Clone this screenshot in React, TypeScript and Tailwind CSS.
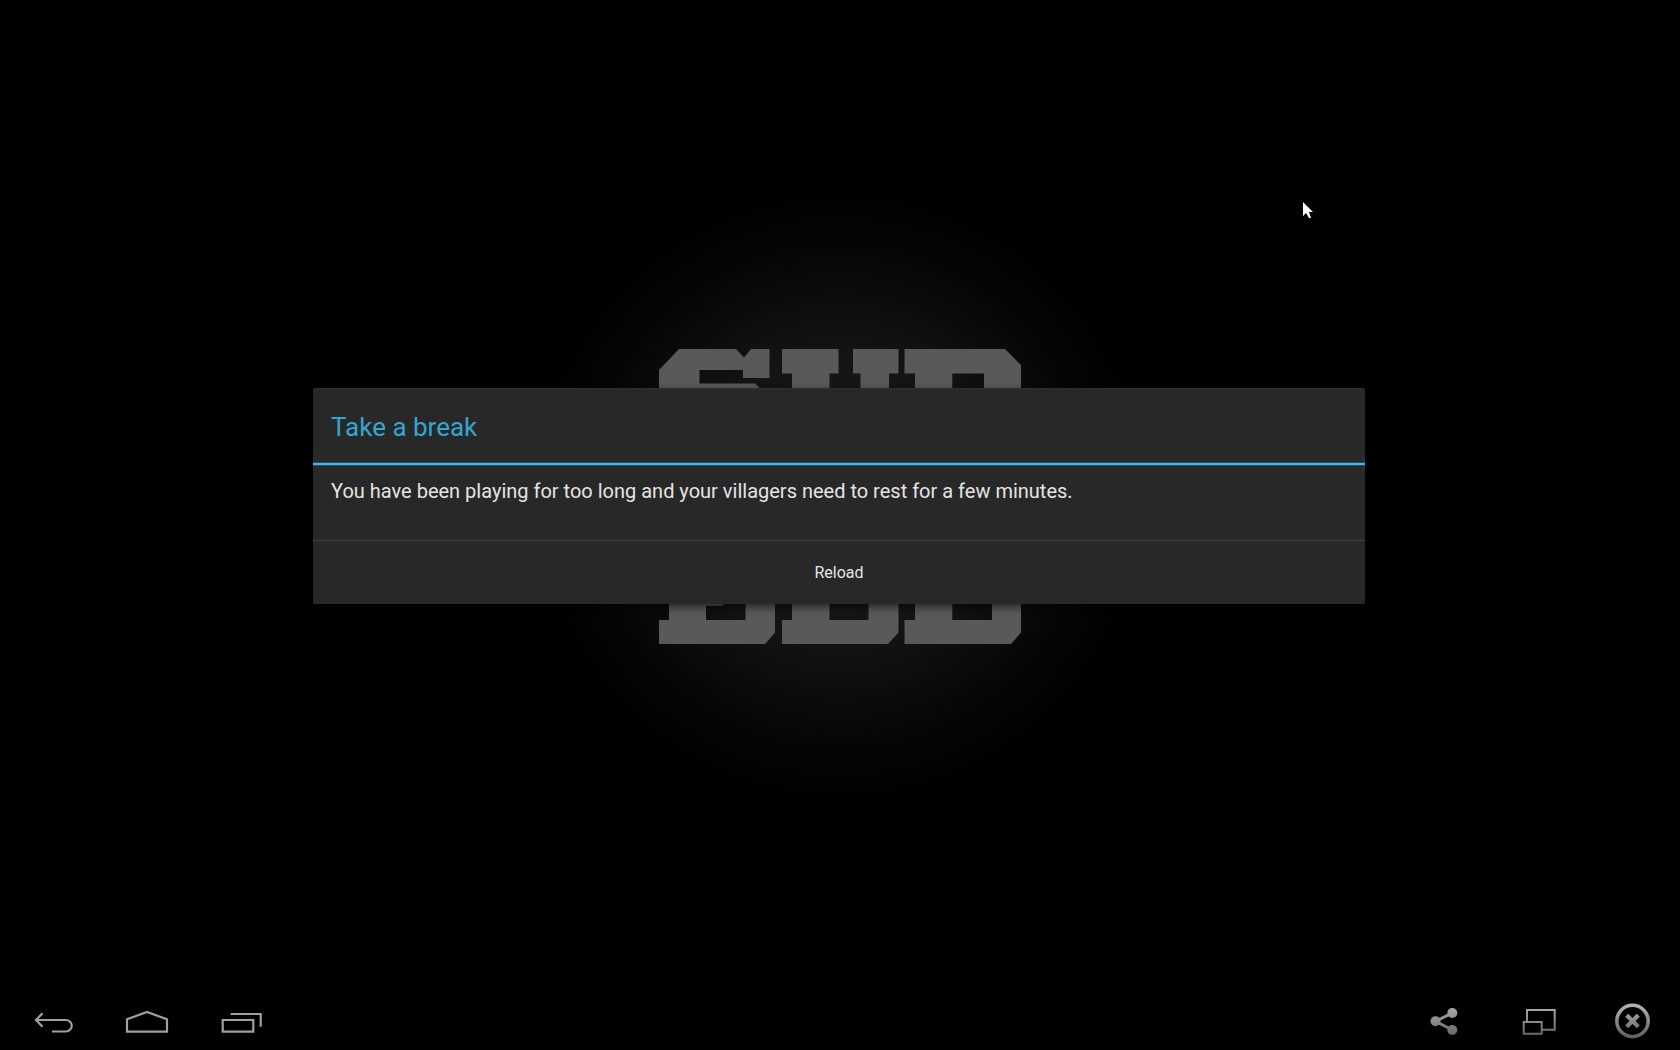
import type { ReactNode } from "react";

/* Slab emblem of the splash screen; its middle lies behind the dialog. */
function Emblem() {
  return (
    <svg
      className="col-start-1 row-start-1 mt-0.5 h-[296px] w-[362px]"
      viewBox="0 0 362 296"
      fill="#585959"
      aria-hidden="true"
    >
      <path d="M0 21 20 0H77L85 8.500 92 0h18.500v29H84v-8H40.500v13.500H96L108 46v14H0Z" />
      <path d="M123 0h56.500v24.500h-9V60H133V24.500h-10ZM194 0h45.500v24.500H230V60h-28.500V24.500H194Z" />
      <path d="M245.500 0H346l16 16v44h-37V24.500h-31.700V60H256V24.500h-10.500Z" />
      <path d="M10 235h54.300v21.700H47V271h39.500v-36H116v48.500L106 295H0v-24h10Z" />
      <path d="M133 235h37.500v36h39v-36h30v48.500L229 295H123v-24h10Z" />
      <path d="M256 235h37.300v36H333v-36h29v48.500L352 295H245.500v-24H256Z" />
    </svg>
  );
}

function BarButton({ label, children }: { label: string; children: ReactNode }) {
  return (
    <button type="button" aria-label={label} className="flex w-[94px] justify-center pt-2">
      <svg className="h-[42px] w-12" viewBox="0 0 48 42" fill="none" stroke="#a0a0a0" strokeWidth="2.2">
        {children}
      </svg>
    </button>
  );
}

function SystemBar() {
  return (
    <nav aria-label="System" className="flex h-[58px] justify-between bg-black pl-[7px]">
      <div className="flex">
        <BarButton label="Back">
          <path d="M12.500 13.300 6 20l6.500 6.700M6 20h30a5.700 5.700 0 0 1 0 11.500H22" />
        </BarButton>
        <BarButton label="Home">
          <path d="M3 19.300 23 12l20 7.300v12.300H3Z" />
        </BarButton>
        <BarButton label="Recent apps">
          <path d="M4.700 20h30.600v11.600H4.700ZM12.700 14h30v12.700" />
        </BarButton>
      </div>
      <div className="flex">
        <BarButton label="Share">
          <defs>
            <linearGradient id="metal" gradientUnits="userSpaceOnUse" x1="0" y1="4" x2="0" y2="38">
              <stop offset="0" stopColor="#b4b4b4" />
              <stop offset="1" stopColor="#606060" />
            </linearGradient>
          </defs>
          <path stroke="url(#metal)" strokeWidth="3" d="M31.300 13 14.500 21.300 31.300 30" />
          <g fill="url(#metal)" stroke="none">
            <circle cx="14.500" cy="21.300" r="5" />
            <circle cx="31.300" cy="13" r="5" />
            <circle cx="31.300" cy="30" r="5" />
          </g>
        </BarButton>
        <BarButton label="Resize window">
          <path stroke="url(#metal)" strokeWidth="2" d="M12 21V10h27.700v19.700H27.500M8.700 22h18v11.700h-18Z" />
        </BarButton>
        <BarButton label="Close">
          <circle cx="23.500" cy="21" r="15.700" stroke="url(#metal)" strokeWidth="3.500" />
          <path stroke="url(#metal)" strokeWidth="4.200" d="m17.700 15.200 11.600 11.600m0-11.600L17.700 26.800" />
        </BarButton>
      </div>
    </nav>
  );
}

function BreakDialog() {
  return (
    <div className="z-10 col-start-1 row-start-1 w-[65%] pr-[21px] pl-[19px]">
      <section
        role="dialog"
        aria-labelledby="dialog-title"
        aria-describedby="dialog-text"
        className="rounded-xs border-t border-[#303030] bg-[#282828] shadow-[0_3px_8px_rgba(0,0,0,0.6)]"
      >
        <h1 id="dialog-title" className="px-[18px] pt-[22px] pb-[19px] text-[26px] leading-8 text-[#33a6d2]">
          Take a break
        </h1>
        <div className="h-1 border-y border-[#1c5469] bg-[#4cb4dc]" />
        <p id="dialog-text" className="px-[18px] pt-3 pb-9 text-xl leading-[26px] text-[#e4e4e4]">
          You have been playing for too long and your villagers need to rest for a few minutes.
        </p>
        <button
          type="button"
          className="block h-16 w-full border-t border-[#414141] text-center text-base text-[#e4e4e4]"
        >
          Reload
        </button>
      </section>
    </div>
  );
}

export default function App() {
  return (
    <div className="relative flex min-h-screen flex-col overflow-hidden bg-black font-['Roboto',sans-serif]">
      <main className="grid flex-1 grid-cols-1 place-items-center bg-[radial-gradient(circle_at_center,#1c1c1c_0,#141414_140px,#0c0c0c_200px,#050505_255px,#000_320px)]">
        <Emblem />
        <BreakDialog />
      </main>
      <SystemBar />
      <svg
        className="absolute top-[202px] left-[1303px] z-20 h-4 w-[10px]"
        viewBox="0 0 10 16"
        fill="#fff"
        aria-hidden="true"
      >
        <path d="M0 0v14l3-3 3 5h2l-2-6h4Z" />
      </svg>
    </div>
  );
}
